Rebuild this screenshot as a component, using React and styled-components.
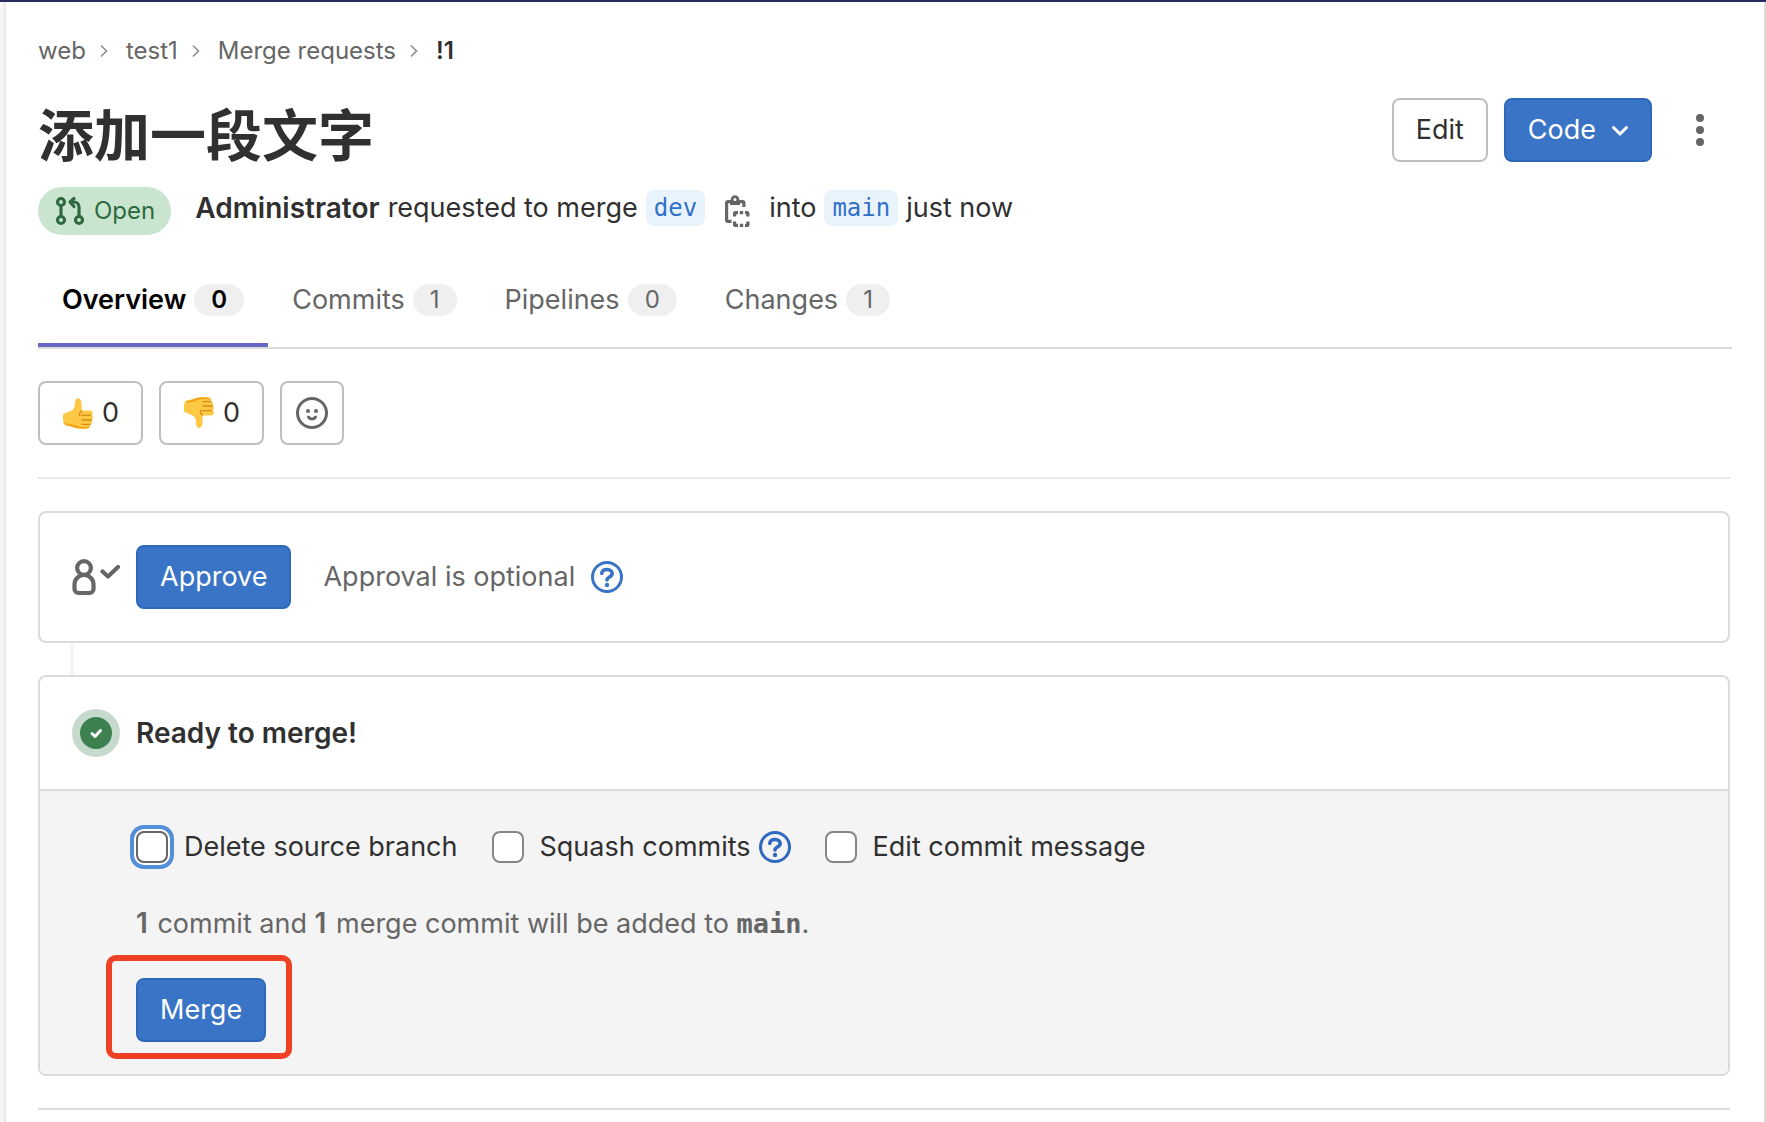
import React from "react";
import styled, { createGlobalStyle, css } from "styled-components";

const Global = createGlobalStyle`
  *, *::before, *::after { box-sizing: border-box; }
  body {
    margin: 0;
    background: #fff;
    color: #303030;
    font-family: Inter, "Noto Sans CJK SC", sans-serif;
    font-size: 27px;
    line-height: 40px;
  }
  button { font: inherit; margin: 0; cursor: pointer; }
  h1, p, ol, ul { margin: 0; padding: 0; }
  svg { display: block; flex: none; }
`;

const Page = styled.div`
  min-height: 100vh;
  display: grid;
  grid-template-columns: 6px minmax(0, 1fr);
  border-top: 2px solid #292961;
`;
const Sidebar = styled.aside`
  background: #f5f5f5;
  border-right: 2px solid #e9e9e9;
`;
const Main = styled.main`
  padding: 29px 32px 0;
  border-right: 2px solid #dbdbdb;
`;

const Crumbs = styled.ol`
  display: flex;
  align-items: center;
  list-style: none;
  font-size: 24px;
  line-height: 40px;
`;
const Crumb = styled.li`
  display: flex;
  align-items: center;
  svg { margin: 0 14px 0 10px; }
`;
const CrumbLink = styled.a`
  color: ${(p) => (p.$current ? "#303030" : "#666")};
  font-weight: ${(p) => (p.$current ? 600 : 400)};
  text-decoration: none;
`;

const Header = styled.header`
  display: flex;
  align-items: flex-start;
  justify-content: space-between;
  padding-top: 27px;
`;
const Title = styled.h1`
  font-size: 56px;
  line-height: 76px;
  font-weight: 700;
`;
const Actions = styled.div`
  display: flex;
  gap: 16px;
`;

const primary = css`
  background: #3974c6;
  border-color: #2f68b8;
  color: #fff;
`;
const Button = styled.button`
  display: inline-flex;
  align-items: center;
  justify-content: center;
  gap: ${(p) => (p.$gap ? p.$gap : 8)}px;
  height: 64px;
  min-width: 64px;
  padding: 0 ${(p) => (p.$square ? 0 : 22)}px;
  border: 2px solid #bfbfbf;
  border-radius: 8px;
  background: #fff;
  color: #303030;
  ${(p) => p.$primary && primary}
  ${(p) => p.$plain && css`border-color: transparent;`}
`;

const Meta = styled.div`
  display: flex;
  align-items: center;
  gap: 24px;
  padding-top: 13px;
`;
const Status = styled.span`
  display: inline-flex;
  align-items: center;
  gap: 8px;
  height: 48px;
  padding: 0 16px;
  border-radius: 24px;
  background: #c9e5d0;
  color: #2f6a3f;
  font-size: 24px;
`;
const Summary = styled.div`
  display: flex;
  align-items: center;
  gap: 8px;
  padding-bottom: 6px;
  strong { font-size: 28px; font-weight: 600; }
`;
const Branch = styled.a`
  padding: 0 8px;
  border-radius: 8px;
  background: #e9f3fc;
  color: #3170c7;
  font-family: "DejaVu Sans Mono", monospace;
  font-size: 24px;
  line-height: 36px;
  text-decoration: none;
`;
const CopyButton = styled.button`
  display: flex;
  padding: 6px 8px 0;
  border: 0;
  background: none;
  color: #666;
`;

const Tabs = styled.nav`
  display: flex;
  margin-top: 32px;
  border-bottom: 2px solid #dbdbdb;
`;
const Tab = styled.a`
  display: flex;
  align-items: center;
  gap: 8px;
  height: 80px;
  padding: 0 24px 14px;
  color: ${(p) => (p.$active ? "#000" : "#666")};
  font-weight: ${(p) => (p.$active ? 600 : 400)};
  text-decoration: none;
  box-shadow: ${(p) => (p.$active ? "inset 0 -4px #6666c4" : "none")};
`;
const Count = styled.span`
  padding: 0 17px;
  border-radius: 16px;
  background: #efefef;
  font-size: 24px;
  line-height: 32px;
`;

const Body = styled.div`
  padding-right: 2px;
`;
const Reactions = styled.div`
  display: flex;
  gap: 16px;
  padding: 32px 0;
  border-bottom: 2px solid #e9e9e9;
`;

const Card = styled.section`
  border: 2px solid #dbdbdb;
  border-radius: 8px;
  overflow: hidden;
`;
const Widgets = styled.div`
  padding: 32px 0;
  border-bottom: 2px solid #dbdbdb;
`;
const Connector = styled.div`
  width: 4px;
  height: 32px;
  margin-left: 32px;
  background: #f5f5f5;
`;
const CardRow = styled.div`
  display: flex;
  align-items: center;
  padding: 32px;
  gap: 16px;
  strong { font-size: 28px; font-weight: 600; }
`;
const Approval = styled.span`
  display: flex;
  align-items: center;
  gap: 16px;
  padding-left: 16px;
  color: #666;
`;
const HelpLink = styled.a`
  display: flex;
  color: ${(p) => (p.$dark ? "#2f68c0" : "#3974c6")};
`;

const MergeForm = styled.form`
  padding: 40px 32px 32px 96px;
  border-top: 2px solid #dbdbdb;
  background: #f4f4f4;
`;
const Options = styled.div`
  display: flex;
  align-items: center;
  gap: 34px;
  height: 32px;
`;
const Option = styled.div`
  display: flex;
  align-items: center;
  gap: 8px;
`;
const OptionLabel = styled.label`
  display: flex;
  align-items: center;
  gap: 16px;
`;
const Checkbox = styled.input`
  appearance: none;
  width: 32px;
  height: 32px;
  margin: 0;
  border: 2px solid ${(p) => (p.$ring ? "#666" : "#868686")};
  border-radius: 8px;
  background: #fff;
  outline: none;
  box-shadow: ${(p) => (p.$ring ? "0 0 0 2px #fff, 0 0 0 6px #538fd9" : "none")};
`;
const Note = styled.p`
  padding: 40px 0 34px;
  color: #666;
  strong { margin-right: 2px; font-size: 28px; font-weight: 600; }
  code {
    font-family: "DejaVu Sans Mono", monospace;
    font-size: 27px;
    font-weight: 700;
  }
`;
const Highlight = styled.div`
  position: relative;
  display: flex;
  width: fit-content;
  &::after {
    content: "";
    position: absolute;
    inset: -23px -26px -17px -30px;
    border: 6px solid #ee4024;
    border-radius: 10px;
    pointer-events: none;
  }
`;

const Chevron = () => (
  <svg width="16" height="16" viewBox="0 0 16 16" fill="none" stroke="#8c8c8c" strokeWidth="1.6">
    <path d="M5 2.500 10.500 8 5 13.500" />
  </svg>
);
const ChevronDown = () => (
  <svg width="16" height="16" viewBox="0 0 16 16" fill="none" stroke="currentColor" strokeWidth="3" strokeLinecap="round" strokeLinejoin="round">
    <path d="m1.500 5.500 6.500 6.500 6.500-6.500" />
  </svg>
);
const Dots = () => (
  <svg width="32" height="32" viewBox="0 0 32 32" fill="#666">
    <circle cx="16" cy="4" r="4" /><circle cx="16" cy="16" r="4" /><circle cx="16" cy="28" r="4" />
  </svg>
);
const MergeIcon = () => (
  <svg width="32" height="32" viewBox="0 0 32 32" fill="none" stroke="currentColor" strokeWidth="3.200">
    <circle cx="7" cy="7" r="3.500" /><circle cx="7" cy="25" r="3.500" /><circle cx="25" cy="25" r="3.500" />
    <path d="M7 10.500v11M25 21.500V12a5 5 0 0 0-5-5h-3" />
    <path d="m20 3.500-4 3.500 4 4.500" strokeLinecap="round" strokeLinejoin="round" />
  </svg>
);
const CopyIcon = () => (
  <svg width="32" height="32" viewBox="0 0 32 32" fill="none" stroke="currentColor" strokeWidth="3.200">
    <path d="M10.500 26.400H7a1.400 1.400 0 0 1-1.400-1.400V8A1.400 1.400 0 0 1 7 6.600h3M18 6.600h3.500A1.400 1.400 0 0 1 22.900 8v4" />
    <path d="M9 5h10v5H9z" fill="currentColor" stroke="none" />
    <circle cx="14" cy="4.500" r="2.900" fill="#fff" strokeWidth="2.800" />
    <path d="M13.600 21.500V18.600a1 1 0 0 1 1-1H17M24 17.600h1.900a1 1 0 0 1 1 1v2.900M26.900 26.500v2.900a1 1 0 0 1-1 1H24M17 30.400h-2.400a1 1 0 0 1-1-1v-2.900M18.800 17.600h3.400M18.800 30.400h3.400" />
  </svg>
);
const Smile = () => (
  <svg width="32" height="32" viewBox="0 0 32 32" fill="none" stroke="#666" strokeWidth="3" strokeLinecap="round">
    <circle cx="16" cy="16" r="14.500" />
    <path d="M12.500 20a4 4 0 0 0 7 0" />
    <circle cx="12" cy="14" r="2" fill="#666" stroke="none" /><circle cx="20" cy="14" r="2" fill="#666" stroke="none" />
  </svg>
);
const Help = () => (
  <svg width="32" height="32" viewBox="0 0 32 32" fill="none" stroke="currentColor" strokeWidth="3" strokeLinecap="round" strokeLinejoin="round">
    <circle cx="16" cy="16" r="14.500" />
    <path d="M10.800 12.500c0-2.500 2.200-4 5.200-4s5.200 1.700 5.200 4c0 3.500-5.200 3.500-5.200 6.500" strokeWidth="3.600" />
    <circle cx="16" cy="24" r="2.200" fill="currentColor" stroke="none" />
  </svg>
);
const ApprovalIcon = () => (
  <svg width="48" height="40" viewBox="0 0 48 40" fill="none" stroke="#666" strokeWidth="4.200" strokeLinejoin="round">
    <circle cx="12" cy="11" r="6.900" />
    <path d="M2.500 32v-4.500a9.500 9.500 0 0 1 19 0V32a4 4 0 0 1-4 4h-11a4 4 0 0 1-4-4z" />
    <path d="m30.500 14.500 5.500 5L46 10" strokeLinecap="round" />
  </svg>
);
const ReadyIcon = () => (
  <svg width="48" height="48" viewBox="0 0 48 48">
    <circle cx="24" cy="24" r="24" fill="#c5dacc" />
    <circle cx="24" cy="24" r="16" fill="#3d8150" />
    <path d="m20 24.500 3 3 5.500-6" fill="none" stroke="#fff" strokeWidth="3" strokeLinecap="round" strokeLinejoin="round" />
  </svg>
);
const Thumb = ({ down }) => (
  <svg width="32" height="32" viewBox="0 0 32 32">
    <g transform={down ? "matrix(1 0 0 -1 0 32)" : undefined}>
      <path d="M1 17.500c3-2.500 8-2.500 10.500-5.500 2-2.500 1.200-5.500 1.800-8.500.6-3.200 4.700-3.200 5.900.5.800 2.800.2 6.500.6 9.500h8c3.400 0 4 4 1.500 4.800 2.300.8 2 4.200 0 4.700 1.600 1.200 1 4-1 4.400.4 2-.8 4.100-3 4.300-5 .5-11 .2-15-1.700-2-1-6.800-.5-8.300-3C.8 24.500.9 21 1 17.500z" fill="#fdc844" />
      <path d="M2 26c2 3 5.500 2.500 8 3.500 4 2 10 2.300 15 1.700 1.200-.2 2-.8 2.500-1.700-6 .8-11 .5-15-1.500-3-1.500-7-1-10.500-2z" fill="#f3a51c" />
      <path d="M19.500 18.300h9M20 23h9.500M20 27.400h8M19.500 14c-1.500 1-2.200 2.500-2 4.500" fill="none" stroke="#d68c12" strokeWidth="1.300" strokeLinecap="round" />
    </g>
  </svg>
);

const crumbs = ["web", "test1", "Merge requests", "!1"];
const tabs = [["Overview", 0], ["Commits", 1], ["Pipelines", 0], ["Changes", 1]];

export default function App() {
  return (
    <>
      <Global />
      <Page>
        <Sidebar />
        <Main>
          <Crumbs aria-label="Breadcrumb">
            {crumbs.map((name, i) => (
              <Crumb key={name}>
                <CrumbLink href="#" $current={i === crumbs.length - 1}>{name}</CrumbLink>
                {i < crumbs.length - 1 && <Chevron />}
              </Crumb>
            ))}
          </Crumbs>
          <Header>
            <Title>添加一段文字</Title>
            <Actions>
              <Button type="button">Edit</Button>
              <Button type="button" $primary $gap={16}>Code<ChevronDown /></Button>
              <Button type="button" $plain $square aria-label="More actions"><Dots /></Button>
            </Actions>
          </Header>
          <Meta>
            <Status><MergeIcon />Open</Status>
            <Summary>
              <strong>Administrator</strong>
              <span>requested to merge</span>
              <Branch href="#">dev</Branch>
              <CopyButton type="button" aria-label="Copy branch name"><CopyIcon /></CopyButton>
              <span>into</span>
              <Branch href="#">main</Branch>
              <span>just now</span>
            </Summary>
          </Meta>
          <Tabs>
            {tabs.map(([name, count], i) => (
              <Tab key={name} href="#" $active={i === 0}>{name}<Count>{count}</Count></Tab>
            ))}
          </Tabs>
          <Body>
            <Reactions>
              <Button type="button" aria-label="Thumbs up"><Thumb />0</Button>
              <Button type="button" aria-label="Thumbs down"><Thumb down />0</Button>
              <Button type="button" $square aria-label="Add reaction"><Smile /></Button>
            </Reactions>
            <Widgets>
              <Card>
                <CardRow>
                  <ApprovalIcon />
                  <Button type="button" $primary>Approve</Button>
                  <Approval>
                    Approval is optional
                    <HelpLink href="#" aria-label="About approvals"><Help /></HelpLink>
                  </Approval>
                </CardRow>
              </Card>
              <Connector />
              <Card>
                <CardRow><ReadyIcon /><strong>Ready to merge!</strong></CardRow>
                <MergeForm onSubmit={(e) => e.preventDefault()}>
                  <Options>
                    <OptionLabel><Checkbox type="checkbox" $ring />Delete source branch</OptionLabel>
                    <Option>
                      <OptionLabel><Checkbox type="checkbox" />Squash commits</OptionLabel>
                      <HelpLink href="#" $dark aria-label="About squashing"><Help /></HelpLink>
                    </Option>
                    <OptionLabel><Checkbox type="checkbox" />Edit commit message</OptionLabel>
                  </Options>
                  <Note>
                    <strong>1</strong> commit and <strong>1</strong> merge commit will be added to <code>main</code>.
                  </Note>
                  <Highlight><Button type="submit" $primary>Merge</Button></Highlight>
                </MergeForm>
              </Card>
            </Widgets>
          </Body>
        </Main>
      </Page>
    </>
  );
}
